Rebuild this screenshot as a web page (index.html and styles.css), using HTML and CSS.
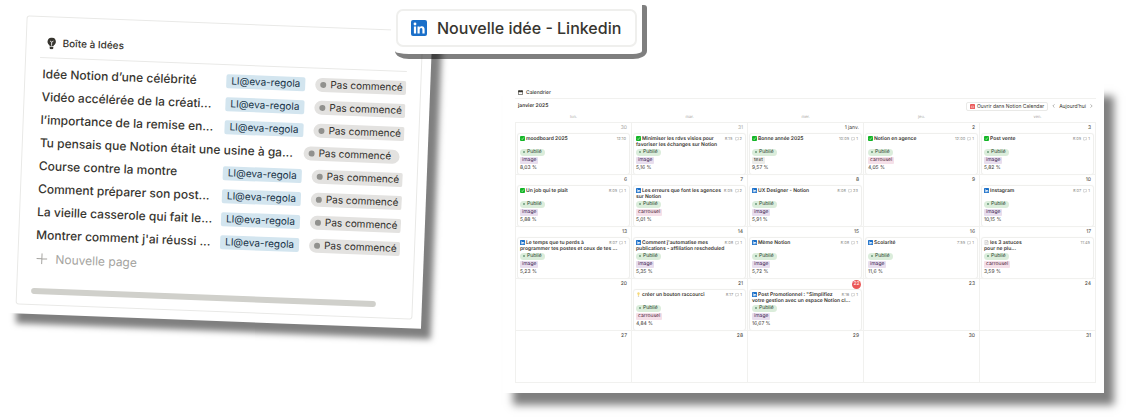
FILE: index.html
```html
<!DOCTYPE html>
<html lang="fr">

<head>
  <meta charset="UTF-8">
  <meta name="viewport" content="width=device-width, initial-scale=1.0">
  <title>Boîte à Idées</title>
  <link rel="stylesheet" href="styles.css">
</head>

<body>
  <!-- Shared icons -->
  <svg class="sprite" aria-hidden="true">
    <symbol id="linkedin" viewBox="0 0 16 16">
      <rect width="16" height="16" rx="2" fill="#1a6fc9" />
      <circle cx="4" cy="4" r="1.4" fill="#fff" />
      <path d="M2.9 6.4h2.2v7H2.9zM6.5 6.4h2.1v1c.4-.7 1.200-1.200 2.300-1.200 2 0 2.700 1.300 2.700 3.300v3.900h-2.200V9.900c0-1-.2-1.800-1.200-1.800s-1.500.7-1.500 1.800v3.500H6.500z" fill="#fff" />
    </symbol>
    <symbol id="check" viewBox="0 0 16 16">
      <rect width="16" height="16" rx="3" fill="#13b526" />
      <path d="M4 8.500l3 3 5.500-7" fill="none" stroke="#d9f7dc" stroke-width="2" />
    </symbol>
    <symbol id="comment" viewBox="0 0 16 16">
      <path d="M2 2h12v9H8l-3 3v-3H2z" fill="none" stroke="#a5a5a3" stroke-width="1.500" />
    </symbol>
    <symbol id="bulb" viewBox="0 0 16 16">
      <path d="M8 1a4 4 0 0 1 2 7.500V12H6V8.500A4 4 0 0 1 8 1z" fill="#f6d978" />
      <path d="M6 13h4v2H6z" fill="#b9b9b5" />
    </symbol>
    <symbol id="page" viewBox="0 0 16 16">
      <path d="M3 1h7l3 3v11H3zM10 1v3h3M5 7h6M5 10h6" fill="none" stroke="#9b9a97" stroke-width="1.200" />
    </symbol>
  </svg>

  <main class="board">
    <section class="ideas">
      <div class="ideas-box">
        <h2 class="ideas-title">
          <svg viewBox="0 0 10 12" width="10" height="12">
            <path d="M5 0a4.200 4.200 0 0 1 2.400 7.600C7 8 6.900 8.300 6.900 8.800H3.100c0-.5-.1-.8-.5-1.200A4.200 4.200 0 0 1 5 0z" fill="#37352f" />
            <path d="M3.200 9.400h3.600v1.200c0 .8-.7 1.200-1.800 1.200s-1.800-.4-1.800-1.200z" fill="#37352f" />
            <path d="M3.300 3.600L5 4.600l1.700-1M5 4.600v3.600" fill="none" stroke="#fff" stroke-width=".8" />
          </svg>
          Boîte à Idées
        </h2>
        <ul class="ideas-list">
          <li><span class="name">Idée Notion d’une célébrité</span><span class="account">LI@eva-regola</span><span class="status">Pas commencé</span></li>
          <li><span class="name">Vidéo accélérée de la créati...</span><span class="account">LI@eva-regola</span><span class="status">Pas commencé</span></li>
          <li><span class="name">l’importance de la remise en...</span><span class="account">LI@eva-regola</span><span class="status">Pas commencé</span></li>
          <li><span class="name long">Tu pensais que Notion était une usine à ga...</span><span class="status full">Pas commencé</span></li>
          <li><span class="name">Course contre la montre</span><span class="account">LI@eva-regola</span><span class="status">Pas commencé</span></li>
          <li><span class="name">Comment préparer son post...</span><span class="account">LI@eva-regola</span><span class="status">Pas commencé</span></li>
          <li><span class="name">La vieille casserole qui fait le...</span><span class="account">LI@eva-regola</span><span class="status">Pas commencé</span></li>
          <li><span class="name">Montrer comment j'ai réussi ...</span><span class="account">LI@eva-regola</span><span class="status">Pas commencé</span></li>
        </ul>
        <button class="new-page">
          <svg viewBox="0 0 11 11" width="11" height="11">
            <path d="M5.500 0v11M0 5.500h11" stroke="#a5a4a0" />
          </svg>
          Nouvelle page
        </button>
        <div class="scrollbar"></div>
      </div>
    </section>

    <section class="calendar">
      <h2 class="calendar-title">
        <svg viewBox="0 0 12 12" width="5" height="5">
          <path d="M1 2h10v9H1z" fill="none" stroke="#37352f" stroke-width="1.500" />
          <path d="M1 2h10v3H1zM3 0v3M9 0v3" fill="#37352f" stroke="#37352f" />
        </svg>
        Calendrier
      </h2>
      <div class="toolbar">
        <h3>janvier 2025</h3>
        <button class="open">
          <svg viewBox="0 0 12 12" width="5" height="5">
            <rect width="12" height="12" rx="2" fill="#eb5757" />
            <path d="M3 5h6v4H3z" fill="none" stroke="#fff" />
          </svg>
          Ouvrir dans Notion Calendar
        </button>
        <button class="arrow" aria-label="Mois précédent"><svg viewBox="0 0 4 6" width="3" height="4">
            <path d="M3.500.5L1 3l2.500 2.500" fill="none" stroke="#91918e" />
          </svg></button>
        <button class="today">Aujourd’hui</button>
        <button class="arrow" aria-label="Mois suivant"><svg viewBox="0 0 4 6" width="3" height="4">
            <path d="M.5.5L3 3 .5 5.500" fill="none" stroke="#91918e" />
          </svg></button>
      </div>
      <table class="month">
        <thead>
          <tr>
            <th>lun.</th>
            <th>mar.</th>
            <th>mer.</th>
            <th>jeu.</th>
            <th>ven.</th>
          </tr>
        </thead>
        <tbody>
          <tr>
            <td>
              <div class="date other">30</div>
              <article class="post">
                <div class="head"><h4><svg><use href="#check" /></svg>moodboard 2025</h4><span class="meta">12:10</span></div>
                <span class="published">Publié</span><span class="tag image">image</span><span class="rate">8,03 %</span>
              </article>
            </td>
            <td>
              <div class="date other">31</div>
              <article class="post">
                <div class="head"><h4><svg><use href="#check" /></svg>Minimiser les rdvs visios pour<br>favoriser les échanges sur Notion</h4><span class="meta">8:15 <svg><use href="#comment" /></svg>2</span></div>
                <span class="published">Publié</span><span class="tag image">image</span><span class="rate">5,16 %</span>
              </article>
            </td>
            <td>
              <div class="date">1 janv.</div>
              <article class="post">
                <div class="head"><h4><svg><use href="#check" /></svg>Bonne année 2025</h4><span class="meta">10:05 <svg><use href="#comment" /></svg>1</span></div>
                <span class="published">Publié</span><span class="tag text">text</span><span class="rate">9,57 %</span>
              </article>
            </td>
            <td>
              <div class="date">2</div>
              <article class="post">
                <div class="head"><h4><svg><use href="#check" /></svg>Notion en agence</h4><span class="meta">12:00 <svg><use href="#comment" /></svg>1</span></div>
                <span class="published">Publié</span><span class="tag carrousel">carrousel</span><span class="rate">4,05 %</span>
              </article>
            </td>
            <td>
              <div class="date">3</div>
              <article class="post">
                <div class="head"><h4><svg><use href="#check" /></svg>Post vente</h4><span class="meta">8:05 <svg><use href="#comment" /></svg>1</span></div>
                <span class="published">Publié</span><span class="tag image">image</span><span class="rate">5,82 %</span>
              </article>
            </td>
          </tr>
          <tr>
            <td>
              <div class="date">6</div>
              <article class="post">
                <div class="head"><h4><svg><use href="#check" /></svg>Un job qui te plaît</h4><span class="meta">8:05 <svg><use href="#comment" /></svg>1</span></div>
                <span class="published">Publié</span><span class="tag image">image</span><span class="rate">5,88 %</span>
              </article>
            </td>
            <td>
              <div class="date">7</div>
              <article class="post">
                <div class="head"><h4><svg><use href="#linkedin" /></svg>Les erreurs que font les agences<br>sur Notion</h4><span class="meta">8:05 <svg><use href="#comment" /></svg>2</span></div>
                <span class="published">Publié</span><span class="tag carrousel">carrousel</span><span class="rate">5,01 %</span>
              </article>
            </td>
            <td>
              <div class="date">8</div>
              <article class="post">
                <div class="head"><h4><svg><use href="#linkedin" /></svg>UX Designer - Notion</h4><span class="meta">8:08 <svg><use href="#comment" /></svg>23</span></div>
                <span class="published">Publié</span><span class="tag image">image</span><span class="rate">5,91 %</span>
              </article>
            </td>
            <td>
              <div class="date">9</div>
            </td>
            <td>
              <div class="date">10</div>
              <article class="post">
                <div class="head"><h4><svg><use href="#linkedin" /></svg>Instagram</h4><span class="meta">8:07 <svg><use href="#comment" /></svg>1</span></div>
                <span class="published">Publié</span><span class="tag image">image</span><span class="rate">10,15 %</span>
              </article>
            </td>
          </tr>
          <tr>
            <td>
              <div class="date">13</div>
              <article class="post">
                <div class="head"><h4><svg><use href="#linkedin" /></svg>Le temps que tu perds à<br>programmer tes postes et ceux de tes ...</h4><span class="meta">8:07 <svg><use href="#comment" /></svg>1</span></div>
                <span class="published">Publié</span><span class="tag image">image</span><span class="rate">5,23 %</span>
              </article>
            </td>
            <td>
              <div class="date">14</div>
              <article class="post">
                <div class="head"><h4><svg><use href="#linkedin" /></svg>Comment j'automatise mes<br>publications - affiliation rescheduled</h4><span class="meta">8:08 <svg><use href="#comment" /></svg>1</span></div>
                <span class="published">Publié</span><span class="tag image">image</span><span class="rate">5,35 %</span>
              </article>
            </td>
            <td>
              <div class="date">15</div>
              <article class="post">
                <div class="head"><h4><svg><use href="#linkedin" /></svg>Mème Notion</h4><span class="meta">8:08 <svg><use href="#comment" /></svg>1</span></div>
                <span class="published">Publié</span><span class="tag image">image</span><span class="rate">5,72 %</span>
              </article>
            </td>
            <td>
              <div class="date">16</div>
              <article class="post">
                <div class="head"><h4><svg><use href="#linkedin" /></svg>Scolarité</h4><span class="meta">7:55 <svg><use href="#comment" /></svg>1</span></div>
                <span class="published">Publié</span><span class="tag image">image</span><span class="rate">11,6 %</span>
              </article>
            </td>
            <td>
              <div class="date">17</div>
              <article class="post">
                <div class="head"><h4><svg><use href="#page" /></svg>les 3 astuces<br>pour ne plu...</h4><span class="meta">11:45</span></div>
                <span class="published">Publié</span><span class="tag carrousel">carrousel</span><span class="rate">3,59 %</span>
              </article>
            </td>
          </tr>
          <tr>
            <td>
              <div class="date">20</div>
            </td>
            <td>
              <div class="date">21</div>
              <article class="post">
                <div class="head"><h4><svg><use href="#bulb" /></svg>créer un bouton raccourci</h4><span class="meta">8:17 <svg><use href="#comment" /></svg>1</span></div>
                <span class="published">Publié</span><span class="tag carrousel">carrousel</span><span class="rate">4,84 %</span>
              </article>
            </td>
            <td>
              <div class="date"><span class="current">22</span></div>
              <article class="post">
                <div class="head"><h4><svg><use href="#linkedin" /></svg>Post Promotionnel : "Simplifiez<br>votre gestion avec un espace Notion cl...</h4><span class="meta">8:16 <svg><use href="#comment" /></svg>1</span></div>
                <span class="published">Publié</span><span class="tag image">image</span><span class="rate">16,67 %</span>
              </article>
            </td>
            <td>
              <div class="date">23</div>
            </td>
            <td>
              <div class="date">24</div>
            </td>
          </tr>
          <tr>
            <td>
              <div class="date">27</div>
            </td>
            <td>
              <div class="date">28</div>
            </td>
            <td>
              <div class="date">29</div>
            </td>
            <td>
              <div class="date">30</div>
            </td>
            <td>
              <div class="date">31</div>
            </td>
          </tr>
        </tbody>
      </table>
    </section>

    <div class="new-idea">
      <button>
        <svg width="16" height="16"><use href="#linkedin" /></svg>
        Nouvelle idée - Linkedin
      </button>
    </div>
  </main>
</body>

</html>
```
FILE: styles.css
```css
* {
  box-sizing: border-box;
}

body {
  margin: 0;
  background-color: white;
  font-family: 'Inter', 'Liberation Sans', sans-serif;
  color: #37352f;
  text-rendering: geometricPrecision;
}

h2,
h3,
h4,
ul {
  margin: 0;
  padding: 0;
}

button {
  font: inherit;
  color: inherit;
  background: none;
  border: none;
  padding: 0;
  cursor: pointer;
}

.sprite {
  display: none;
}

.board {
  position: relative;
  display: grid;
  grid-template-columns: minmax(0, 415fr) minmax(0, 601fr);
  gap: 76px;
  align-items: start;
  padding: 14px 36px 24px 12px;
}

/* Ideas list */
.ideas {
  padding: 9px;
  background-color: white;
  box-shadow: 10px 10px 6px rgba(0, 0, 0, 0.5);
  transform: rotate(2.2deg);
}

.ideas-box {
  padding: 12px 14px 10px;
  border: 1px solid #e9e9e7;
  border-radius: 3px;
}

.ideas-title {
  display: flex;
  align-items: center;
  gap: 6px;
  height: 29px;
  padding-left: 6px;
  border-bottom: 1px solid #e9e9e7;
  font-size: 10px;
  font-weight: 500;
}

.ideas-list {
  list-style: none;
  margin-top: 4px;
}

.ideas-list li {
  display: flex;
  align-items: center;
  height: 23px;
  padding-left: 3px;
  overflow: hidden;
  white-space: nowrap;
}

.name {
  flex: none;
  width: 184px;
  font-size: 12px;
  font-weight: 500;
}

.name.long {
  width: 264px;
}

.account {
  flex: none;
  margin-right: 10px;
  padding: 0 5px;
  border-radius: 2px;
  background-color: #d3e5ef;
  font-size: 10px;
  line-height: 14px;
  color: #183347;
}

.status {
  flex: 1;
  display: flex;
  align-items: center;
  gap: 4px;
  padding-left: 5px;
  border-radius: 7px 2px 2px 7px;
  background-color: #e3e2e0;
  font-size: 10px;
  line-height: 14px;
  color: #32302c;
}

.status.full {
  flex: none;
  padding-right: 8px;
  border-radius: 7px;
}

.status::before {
  content: '';
  width: 6px;
  height: 6px;
  border-radius: 50%;
  background-color: #91918e;
}

.new-page {
  display: flex;
  align-items: center;
  gap: 8px;
  height: 24px;
  padding-left: 4px;
  font-size: 12px;
  color: #a5a4a0;
}

.scrollbar {
  width: 94%;
  height: 6px;
  margin-top: 18px;
  border-radius: 3px;
  background-color: #d0d0cb;
}

/* Calendar */
.calendar {
  margin-top: 70px;
  padding: 3px 8px 10px 12px;
  background-color: white;
  box-shadow: 10px 12px 8px rgba(0, 0, 0, 0.5);
  font-size: 5px;
  line-height: 6px;
}

.calendar-title {
  display: flex;
  align-items: center;
  gap: 3px;
  height: 12px;
  padding-left: 3px;
  border-bottom: 1px solid #f1f1ef;
  font-size: 5px;
  font-weight: 500;
}

.toolbar {
  display: flex;
  align-items: center;
  gap: 4px;
  height: 14px;
  padding: 0 3px;
}

.toolbar h3 {
  flex: 1;
  font-size: 5px;
  font-weight: 600;
}

.toolbar button {
  display: flex;
  align-items: center;
}

.toolbar .open {
  gap: 2px;
  height: 9px;
  padding: 0 3px;
  border: 1px solid #e9e9e7;
  border-radius: 2px;
}

.month {
  width: 100%;
  table-layout: fixed;
  border-collapse: collapse;
}

.month th {
  height: 9px;
  padding: 0;
  font-size: 4px;
  font-weight: 400;
  color: #a5a4a0;
}

.month td {
  height: 52px;
  padding: 0 2px;
  border: 1px solid #f1f1ef;
  vertical-align: top;
}

.date {
  display: flex;
  align-items: center;
  justify-content: flex-end;
  height: 11px;
  padding-right: 2px;
}

.date.other {
  color: #a5a4a0;
}

.current {
  width: 9px;
  margin-right: -2px;
  border-radius: 50%;
  background-color: #eb5757;
  line-height: 9px;
  text-align: center;
  color: white;
}

.post {
  display: flex;
  flex-direction: column;
  align-items: flex-start;
  gap: 1px;
  padding: 2px;
  border-radius: 2px;
  box-shadow: 0 0 1px 1px #eeeeec;
  line-height: 7px;
}

.head {
  display: flex;
  justify-content: space-between;
  align-self: stretch;
  height: 12px;
  line-height: 6px;
}

.head h4 {
  width: 0;
  font-size: 5px;
  font-weight: 600;
  white-space: nowrap;
}

.head h4 svg {
  width: 5px;
  height: 5px;
  margin-right: 1px;
  vertical-align: -1px;
}

.meta {
  padding-right: 1px;
  font-size: 4px;
  color: #91918e;
}

.meta svg {
  width: 4px;
  height: 4px;
  margin: 0 1px;
  vertical-align: -1px;
}

.published {
  display: flex;
  align-items: center;
  gap: 2px;
  height: 7px;
  padding: 0 3px;
  border-radius: 4px;
  background-color: #dbeddb;
  color: #1c3829;
}

.published::before {
  content: '';
  width: 2px;
  height: 2px;
  border-radius: 50%;
  background-color: #6c9b7d;
}

.tag {
  height: 7px;
  padding: 0 2px;
  border-radius: 1px;
}

.tag.image {
  background-color: #e8deee;
  color: #412454;
}

.tag.carrousel {
  background-color: #f5e0e9;
  color: #4c2337;
}

.tag.text {
  background-color: #ececea;
}

/* New idea button, laid over the list */
.new-idea {
  position: absolute;
  top: 0;
  left: 391px;
  padding: 9px 5px 7px;
  background-color: white;
  isolation: isolate;
}

/* Hard shadow, only drawn outside of the white box */
.new-idea::after {
  content: '';
  position: absolute;
  top: 5px;
  left: 4px;
  right: -5px;
  bottom: -5px;
  border: solid rgba(0, 0, 0, 0.5);
  border-width: 0 5px 5px 0;
  border-radius: 0 3px 14px 14px / 0 3px 8px 8px;
  pointer-events: none;
}

.new-idea button {
  display: flex;
  align-items: center;
  gap: 10px;
  height: 38px;
  padding: 0 14px 0 13px;
  border: 2px solid #efefed;
  border-radius: 7px;
  font-size: 16px;
  font-weight: 500;
  white-space: nowrap;
}
```
